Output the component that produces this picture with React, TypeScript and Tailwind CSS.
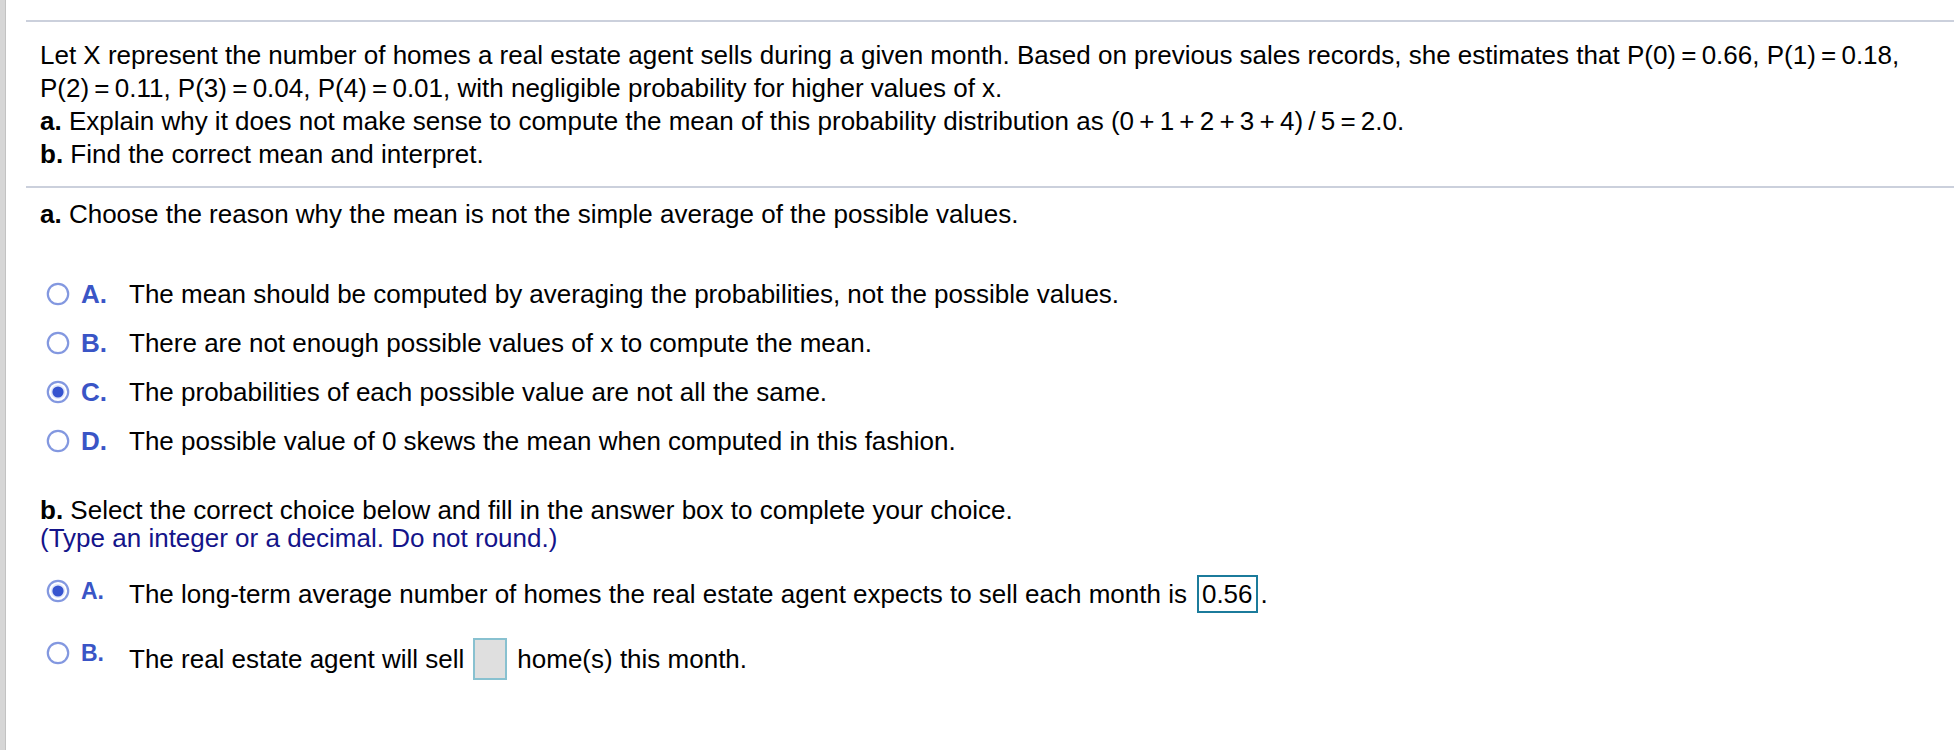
import React from "react";

const FONT = { fontFamily: '"Liberation Sans", Arial, Helvetica, sans-serif' };
const T = "\u2009";

function Radio({ selected }: { selected?: boolean }) {
  return (
    <svg width="24" height="24" viewBox="0 0 24 24" className="shrink-0">
      <defs>
        <filter id="soft" x="-20%" y="-20%" width="140%" height="140%">
          <feGaussianBlur stdDeviation="0.4" />
        </filter>
      </defs>
      <circle cx="12" cy="12" r="10.2" fill="#ffffff" stroke="#8398e0" strokeWidth="2.2" filter="url(#soft)" />
      {selected && (
        <>
          <circle cx="12" cy="12" r="7.2" fill="#e1e7fb" />
          <circle cx="12" cy="12" r="5.6" fill="#3452cf" filter="url(#soft)" />
        </>
      )}
    </svg>
  );
}

function OptionA({ letter, text, selected }: { letter: string; text: string; selected?: boolean }) {
  return (
    <div className="flex items-center h-[30px]">
      <div className="w-[46px] flex justify-center">
        <Radio selected={selected} />
      </div>
      <span className="font-bold text-[#3a55c6] w-[48px]">{letter}.</span>
      <span>{text}</span>
    </div>
  );
}

export default function App() {
  return (
    <div className="w-full min-h-[750px] bg-white flex text-black text-[26px] leading-[30px]" style={FONT}>
      <div className="w-[6px] shrink-0 bg-[#d6d6d6] border-r border-[#c2c2c2]" />
      <div className="flex-1 pl-[20px] pt-[20px]">
        <div className="h-[2px] bg-[#cbd0dc]" />
        <div className="pl-[14px] pt-[17px] pb-[15px] leading-[33px]">
          <p>
            Let X represent the number of homes a real estate agent sells during a given month. Based on previous sales
            records, she estimates that P(0){T}={T}0.66, P(1){T}={T}0.18,
            <br />
            P(2){T}={T}0.11, P(3){T}={T}0.04, P(4){T}={T}0.01, with negligible probability for higher values of x.
          </p>
          <p>
            <span className="font-bold">a.</span> Explain why it does not make sense to compute the mean of this
            probability distribution as (0{T}+{T}1{T}+{T}2{T}+{T}3{T}+{T}4){T}/{T}5{T}={T}2.0.
          </p>
          <p>
            <span className="font-bold">b.</span> Find the correct mean and interpret.
          </p>
        </div>
        <div className="h-[2px] bg-[#cbd0dc]" />
        <div className="pl-[14px] pt-[11px] pb-[40px]">
          <p>
            <span className="font-bold">a.</span> Choose the reason why the mean is not the simple average of the
            possible values.
          </p>
          <div className="mt-[50px] flex flex-col gap-[19px] -ml-[5px]">
            <OptionA letter="A" text="The mean should be computed by averaging the probabilities, not the possible values." />
            <OptionA letter="B" text="There are not enough possible values of x to compute the mean." />
            <OptionA letter="C" text="The probabilities of each possible value are not all the same." selected />
            <OptionA letter="D" text="The possible value of 0 skews the mean when computed in this fashion." />
          </div>
          <p className="mt-[40px] leading-[28px]">
            <span className="font-bold">b.</span> Select the correct choice below and fill in the answer box to complete
            your choice.
          </p>
          <p className="text-[#14148a] leading-[28px]">(Type an integer or a decimal. Do not round.)</p>

          <div className="mt-[23px] flex items-start -ml-[5px]">
            <div className="w-[46px] flex justify-center mt-[4px]">
              <Radio selected />
            </div>
            <span className="font-bold text-[#3a55c6] text-[23px] leading-[26px] w-[48px] mt-[3px]">A.</span>
            <div className="flex items-center h-[38px]">
              <span>The long-term average number of homes the real estate agent expects to sell each month is</span>
              <span className="ml-[10px] h-[38px] px-[3px] border-2 border-[#1b7b9b] flex items-center">0.56</span>
              <span className="ml-[3px]">.</span>
            </div>
          </div>

          <div className="mt-[25px] flex items-start -ml-[5px]">
            <div className="w-[46px] flex justify-center mt-[3px]">
              <Radio />
            </div>
            <span className="font-bold text-[#3a55c6] text-[23px] leading-[26px] w-[48px] mt-[2px]">B.</span>
            <div className="flex items-center h-[42px]">
              <span>The real estate agent will sell</span>
              <span className="ml-[9px] w-[34px] h-[42px] bg-[#dfdfdf] border-2 border-[#88c1d0]" />
              <span className="ml-[10px]">home(s) this month.</span>
            </div>
          </div>
        </div>
      </div>
    </div>
  );
}
